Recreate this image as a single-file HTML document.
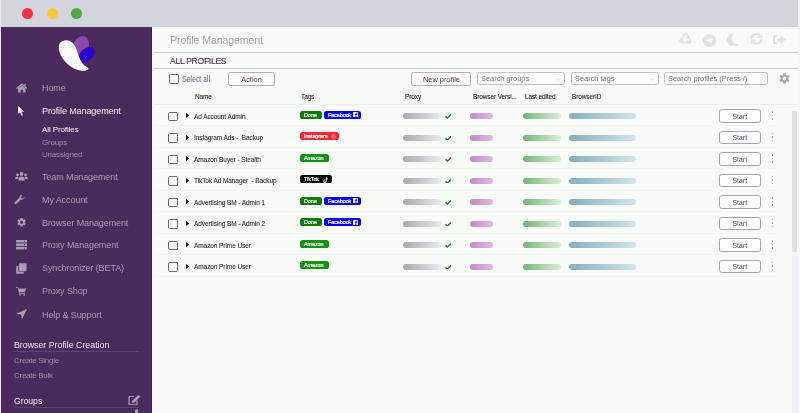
<!DOCTYPE html><html><head><meta charset="utf-8"><style>
html,body{margin:0;padding:0;width:800px;height:413px;overflow:hidden;background:#fafbfa}
body{position:relative;font-family:"Liberation Sans",sans-serif}
.a{position:absolute}
.t{position:absolute;white-space:nowrap;line-height:1;will-change:transform}
.btn{border:1px solid #a7a4ad;border-radius:2.5px;box-sizing:border-box;text-align:center;background:#fdfdfd;white-space:nowrap}
.sel{will-change:transform;border:1px solid #c2c2c6;border-radius:2.5px;box-sizing:border-box;font-size:7.3px;color:#7c7c80;padding-left:3.6px;background:#fdfdfd;white-space:nowrap}
.tag{height:7.9px;border-radius:2.6px;box-sizing:border-box;white-space:nowrap}
.tg{will-change:transform;position:absolute;left:3.5px;top:1.85px;font-size:5.5px;line-height:1;color:#fff;letter-spacing:-0.12px;-webkit-text-stroke:0.2px #fff}
</style></head><body>
<div class="a" style="left:0.00px;top:0.00px;width:800.00px;height:27.00px;background:#d2d6dc"></div>
<div class="a" style="left:0.00px;top:0.00px;width:1.00px;height:413.00px;background:#e6e8eb"></div>
<div class="a" style="left:21.80px;top:7.50px;width:11.20px;height:11.20px;background:#ee3344;border-radius:50%"></div>
<div class="a" style="left:46.50px;top:7.50px;width:11.20px;height:11.20px;background:#f9c93a;border-radius:50%"></div>
<div class="a" style="left:71.20px;top:7.50px;width:11.20px;height:11.20px;background:#4ca846;border-radius:50%"></div>
<div class="a" style="left:1.00px;top:27.00px;width:151.00px;height:386.00px;background:#4b2b5d"></div>
<div class="a" style="left:151.00px;top:27.00px;width:1.40px;height:386.00px;background:#3d2150"></div>
<div class="a" style="left:152.40px;top:27.00px;width:647.60px;height:386.00px;background:#f9fbf9"></div>
<div class="a" style="left:152.40px;top:27.00px;width:1.60px;height:386.00px;background:#ffffff"></div>
<svg class="a" style="left:50px;top:30px" width="60" height="45" viewBox="0 0 60 45">
<ellipse cx="31" cy="15.8" rx="7.7" ry="10" transform="rotate(22 31 15.8)" fill="#8d48a8"/>
<ellipse cx="36.3" cy="25" rx="9.6" ry="6.2" transform="rotate(-42 36.3 25)" fill="#2a06cf"/>
<path d="M10.5 12.5 C 15 8.5, 22 10, 25 16 C 28 22, 29 29, 33 34 C 35 36.5, 39 37.5, 38.5 39 C 37 41.5, 30 41.5, 24 38.5 C 15 34, 8 24, 8.8 16 C 9 14.5, 9.6 13.3, 10.5 12.5 Z" fill="#fafbfa"/>
</svg>
<div class="t" style="left:42.10px;top:84.28px;font-size:9px;color:#a99bb2;letter-spacing:-0.1px">Home</div>
<div class="t" style="left:42.10px;top:106.78px;font-size:9px;color:#f4f2f5;letter-spacing:-0.1px">Profile Management</div>
<div class="t" style="left:42.10px;top:172.68px;font-size:9px;color:#a99bb2;letter-spacing:-0.1px">Team Management</div>
<div class="t" style="left:42.10px;top:196.08px;font-size:9px;color:#a99bb2;letter-spacing:-0.1px">My Account</div>
<div class="t" style="left:42.10px;top:218.68px;font-size:9px;color:#a99bb2;letter-spacing:-0.1px">Browser Management</div>
<div class="t" style="left:42.10px;top:241.48px;font-size:9px;color:#a99bb2;letter-spacing:-0.1px">Proxy Management</div>
<div class="t" style="left:42.10px;top:264.48px;font-size:9px;color:#a99bb2;letter-spacing:-0.1px">Synchronizer (BETA)</div>
<div class="t" style="left:42.10px;top:287.48px;font-size:9px;color:#a99bb2;letter-spacing:-0.1px">Proxy Shop</div>
<div class="t" style="left:42.10px;top:310.98px;font-size:9px;color:#a99bb2;letter-spacing:-0.1px">Help &amp; Support</div>
<div class="t" style="left:41.80px;top:126.43px;font-size:8px;color:#f4f2f5;letter-spacing:-0.1px">All Profiles</div>
<div class="t" style="left:41.80px;top:138.73px;font-size:8px;color:#9d8ea8;letter-spacing:-0.2px">Groups</div>
<div class="t" style="left:41.80px;top:150.93px;font-size:8px;color:#9d8ea8;letter-spacing:-0.2px">Unassigned</div>
<div class="t" style="left:14.00px;top:341.35px;font-size:8.8px;color:#ece8ee;">Browser Profile Creation</div>
<div class="a" style="left:14.00px;top:350.60px;width:125.00px;height:1.00px;background:#633c7b"></div>
<div class="t" style="left:14.00px;top:356.73px;font-size:8px;color:#9d8ea8;letter-spacing:-0.28px">Create Single</div>
<div class="t" style="left:14.00px;top:371.83px;font-size:8px;color:#9d8ea8;letter-spacing:-0.28px">Create Bulk</div>
<div class="t" style="left:14.00px;top:397.42px;font-size:8.6px;color:#ece8ee;">Groups</div>
<div class="a" style="left:14.00px;top:406.60px;width:125.00px;height:1.00px;background:#633c7b"></div>
<div class="t" style="left:169.70px;top:35.13px;font-size:10.6px;color:#a4a8af;letter-spacing:-0.1px">Profile Management</div>
<div class="a" style="left:154.00px;top:52.00px;width:643.60px;height:1.00px;background:#cdcdd3"></div>
<div class="t" style="left:170.00px;top:57.22px;font-size:8.6px;color:#4f3a62;letter-spacing:-0.3px;-webkit-text-stroke:0.2px #4f3a62">ALL PROFILES</div>
<div class="a" style="left:154.00px;top:68.00px;width:643.60px;height:1.00px;background:#cdcdd3"></div>
<div class="a" style="left:169.30px;top:74.20px;width:9.60px;height:9.60px;border:1.3px solid #6a6a6a;border-radius:1.5px;box-sizing:border-box"></div>
<div class="t" style="left:182.20px;top:75.51px;font-size:8.2px;color:#6c5a84;letter-spacing:-0.1px;transform:scaleX(0.87);transform-origin:0 0">Select all</div>
<div class="a btn" style="left:228.00px;top:72.30px;width:47.00px;height:13.30px;border-color:#b2aeb8"></div>
<div class="t" style="left:228.00px;width:47.00px;text-align:center;top:75.94px;font-size:7.4px;color:#4a3a58;letter-spacing:0px">Action</div>
<div class="a btn" style="left:410.70px;top:72.40px;width:60.80px;height:13.20px;border-color:#b6b2bc"></div>
<div class="t" style="left:410.70px;width:60.80px;text-align:center;top:75.85px;font-size:7.5px;color:#4d3a5e;letter-spacing:-0.05px">New profile</div>
<div class="a sel" style="left:477.20px;top:72.4px;width:87.60px;height:12.8px;"></div>
<div class="t" style="left:480.90px;top:75.39px;font-size:7.45px;color:#737377;letter-spacing:-0.02px">Search groups</div>
<svg class="a" style="left:555.60px;top:77.8px" width="4.4" height="2.8" viewBox="0 0 5 3"><path d="M0.3 0.3 L2.5 2.5 L4.7 0.3" fill="none" stroke="#b4b4b8" stroke-width="0.6"/></svg>
<div class="a sel" style="left:570.90px;top:72.4px;width:88.10px;height:12.8px;"></div>
<div class="t" style="left:574.60px;top:75.39px;font-size:7.45px;color:#737377;letter-spacing:-0.02px">Search tags</div>
<svg class="a" style="left:649.80px;top:77.8px" width="4.4" height="2.8" viewBox="0 0 5 3"><path d="M0.3 0.3 L2.5 2.5 L4.7 0.3" fill="none" stroke="#b4b4b8" stroke-width="0.6"/></svg>
<div class="a sel" style="left:664.30px;top:72.4px;width:104.00px;height:12.8px;"></div>
<div class="t" style="left:668.00px;top:75.39px;font-size:7.45px;color:#737377;letter-spacing:-0.02px">Search profiles (Press /)</div>
<svg class="a" style="left:777.9px;top:72.2px" width="13" height="13" viewBox="0 0 24 24"><path fill="#a8a8ac" d="M19.14 12.94c.04-.3.06-.61.06-.94 0-.32-.02-.64-.07-.94l2.03-1.58a.49.49 0 0 0 .12-.61l-1.92-3.32a.488.488 0 0 0-.59-.22l-2.39.96c-.5-.38-1.03-.7-1.62-.94l-.36-2.54a.484.484 0 0 0-.48-.41h-3.84c-.24 0-.43.17-.47.41l-.36 2.54c-.59.24-1.13.57-1.62.94l-2.39-.96c-.22-.08-.47 0-.59.22L2.74 8.87c-.12.21-.08.47.12.61l2.03 1.58c-.05.3-.09.63-.09.94s.02.64.07.94l-2.03 1.58a.49.49 0 0 0-.12.61l1.92 3.32c.12.22.37.29.59.22l2.39-.96c.5.38 1.03.7 1.62.94l.36 2.54c.05.24.24.41.48.41h3.84c.24 0 .44-.17.47-.41l.36-2.54c.59-.24 1.13-.56 1.62-.94l2.39.96c.22.08.47 0 .59-.22l1.92-3.32c.12-.22.07-.47-.12-.61l-2.01-1.58zM12 15.6c-1.98 0-3.6-1.62-3.6-3.6s1.62-3.6 3.6-3.6 3.6 1.62 3.6 3.6-1.62 3.6-3.6 3.6z"/></svg>
<div class="t" style="left:194.80px;top:94.10px;font-size:6.5px;color:#262626;letter-spacing:-0.12px;-webkit-text-stroke:0.1px #262626">Name</div>
<div class="t" style="left:301.00px;top:94.10px;font-size:6.5px;color:#262626;letter-spacing:-0.12px;-webkit-text-stroke:0.1px #262626">Tags</div>
<div class="t" style="left:405.00px;top:94.10px;font-size:6.5px;color:#262626;letter-spacing:-0.12px;-webkit-text-stroke:0.1px #262626">Proxy</div>
<div class="t" style="left:473.00px;top:94.10px;font-size:6.5px;color:#262626;letter-spacing:-0.12px;-webkit-text-stroke:0.1px #262626">Browser Versi...</div>
<div class="t" style="left:525.00px;top:94.10px;font-size:6.5px;color:#262626;letter-spacing:-0.12px;-webkit-text-stroke:0.1px #262626">Last edited</div>
<div class="t" style="left:571.50px;top:94.10px;font-size:6.5px;color:#262626;letter-spacing:-0.12px;-webkit-text-stroke:0.1px #262626">BrowserID</div>
<div class="a" style="left:154.00px;top:103.70px;width:643.00px;height:1.00px;background:#ececef"></div>
<div class="a" style="left:168.10px;top:111.90px;width:9.70px;height:9.50px;border:1.3px solid #6a6a6a;border-radius:1.5px;box-sizing:border-box"></div>
<svg class="a" style="left:186.2px;top:113.10px" width="3.2" height="5" viewBox="0 0 3.2 5"><path d="M0 0 L3.2 2.5 L0 5Z" fill="#111"/></svg>
<div class="t" style="left:194.10px;top:113.80px;font-size:6.5px;color:#2c2c2c;letter-spacing:-0.08px;-webkit-text-stroke:0.08px #2c2c2c">Ad Account Admin</div>
<div class="a tag" style="left:300.40px;top:110.90px;width:21.3px;background:#0b7a0b"><span class="tg">Done</span></div>
<div class="a tag" style="left:324.10px;top:110.90px;width:37.2px;background:#0000ee"><span class="tg">Facebook</span><svg class="a" style="left:29px;top:1.5px" width="5" height="5" viewBox="0 0 10 10"><rect x="0" y="0" width="10" height="10" rx="1.5" fill="#fff"/><path d="M6.8 10 V6 H8.2 L8.4 4.5 H6.8 V3.6 C6.8 3.1 7 2.8 7.6 2.8 H8.5 V1.4 C8.2 1.35 7.7 1.3 7.2 1.3 C5.9 1.3 5.1 2.1 5.1 3.4 V4.5 H3.8 V6 H5.1 V10Z" fill="#0000ee"/></svg></div>
<div class="a" style="left:402.50px;top:113.00px;width:38.50px;height:6.30px;border-radius:4px;background:linear-gradient(90deg,#a9a9b1,#e9e9ed)"></div>
<svg class="a" style="left:444.8px;top:114.00px" width="6.5" height="4.8" viewBox="0 0 6.5 4.8"><path d="M0.5 2.4 L2.4 4.1 L6 0.6" fill="none" stroke="#139413" stroke-width="1.45"/></svg>
<div class="a" style="left:469.70px;top:113.00px;width:23.70px;height:6.30px;border-radius:4px;background:linear-gradient(90deg,#c388ca,#e0bce0)"></div>
<div class="a" style="left:523.10px;top:113.00px;width:37.90px;height:6.30px;border-radius:4px;background:linear-gradient(90deg,#74b574,#dbeeda)"></div>
<div class="a" style="left:568.60px;top:113.00px;width:67.40px;height:6.30px;border-radius:4px;background:linear-gradient(90deg,#85aebe,#d3e5ea)"></div>
<div class="a btn" style="left:719.20px;top:109.30px;width:41.60px;height:13.30px;border-color:#a7a4ad"></div>
<div class="t" style="left:719.20px;width:41.60px;text-align:center;top:113.96px;font-size:6.9px;color:#58486a;letter-spacing:0px">Start</div>
<div class="a" style="left:771.90px;top:111.40px;width:1.20px;height:1.20px;background:#a8a8ac;border-radius:50%"></div>
<div class="a" style="left:771.90px;top:114.90px;width:1.20px;height:1.20px;background:#a8a8ac;border-radius:50%"></div>
<div class="a" style="left:771.90px;top:118.40px;width:1.20px;height:1.20px;background:#a8a8ac;border-radius:50%"></div>
<div class="a" style="left:154.00px;top:125.30px;width:625.00px;height:0.70px;background:#f4f5f4"></div>
<div class="a" style="left:168.10px;top:133.40px;width:9.70px;height:9.50px;border:1.3px solid #6a6a6a;border-radius:1.5px;box-sizing:border-box"></div>
<svg class="a" style="left:186.2px;top:134.60px" width="3.2" height="5" viewBox="0 0 3.2 5"><path d="M0 0 L3.2 2.5 L0 5Z" fill="#111"/></svg>
<div class="t" style="left:194.10px;top:135.30px;font-size:6.5px;color:#2c2c2c;letter-spacing:-0.08px;-webkit-text-stroke:0.08px #2c2c2c">Instagram Ads -&nbsp; Backup</div>
<div class="a tag" style="left:300.40px;top:132.40px;width:38.5px;background:#ee2a38"><span class="tg">Instagram</span><svg class="a" style="left:30.5px;top:1.6px" width="5" height="5" viewBox="0 0 10 10"><rect x="0.8" y="0.8" width="8.4" height="8.4" rx="2.5" fill="none" stroke="#ffb9a8" stroke-width="1.2" stroke-dasharray="1.5 1"/><circle cx="5" cy="5" r="1.8" fill="none" stroke="#ffc6c6" stroke-width="1"/></svg></div>
<div class="a" style="left:402.50px;top:134.50px;width:38.50px;height:6.30px;border-radius:4px;background:linear-gradient(90deg,#a9a9b1,#e9e9ed)"></div>
<svg class="a" style="left:444.8px;top:135.50px" width="6.5" height="4.8" viewBox="0 0 6.5 4.8"><path d="M0.5 2.4 L2.4 4.1 L6 0.6" fill="none" stroke="#139413" stroke-width="1.45"/></svg>
<div class="a" style="left:469.70px;top:134.50px;width:23.70px;height:6.30px;border-radius:4px;background:linear-gradient(90deg,#c388ca,#e0bce0)"></div>
<div class="a" style="left:523.10px;top:134.50px;width:37.90px;height:6.30px;border-radius:4px;background:linear-gradient(90deg,#74b574,#dbeeda)"></div>
<div class="a" style="left:568.60px;top:134.50px;width:67.40px;height:6.30px;border-radius:4px;background:linear-gradient(90deg,#85aebe,#d3e5ea)"></div>
<div class="a btn" style="left:719.20px;top:130.80px;width:41.60px;height:13.30px;border-color:#a7a4ad"></div>
<div class="t" style="left:719.20px;width:41.60px;text-align:center;top:135.46px;font-size:6.9px;color:#58486a;letter-spacing:0px">Start</div>
<div class="a" style="left:771.90px;top:132.90px;width:1.20px;height:1.20px;background:#a8a8ac;border-radius:50%"></div>
<div class="a" style="left:771.90px;top:136.40px;width:1.20px;height:1.20px;background:#a8a8ac;border-radius:50%"></div>
<div class="a" style="left:771.90px;top:139.90px;width:1.20px;height:1.20px;background:#a8a8ac;border-radius:50%"></div>
<div class="a" style="left:154.00px;top:146.80px;width:625.00px;height:0.70px;background:#f4f5f4"></div>
<div class="a" style="left:168.10px;top:154.90px;width:9.70px;height:9.50px;border:1.3px solid #6a6a6a;border-radius:1.5px;box-sizing:border-box"></div>
<svg class="a" style="left:186.2px;top:156.10px" width="3.2" height="5" viewBox="0 0 3.2 5"><path d="M0 0 L3.2 2.5 L0 5Z" fill="#111"/></svg>
<div class="t" style="left:194.10px;top:156.80px;font-size:6.5px;color:#2c2c2c;letter-spacing:-0.08px;-webkit-text-stroke:0.08px #2c2c2c">Amazon Buyer - Stealth</div>
<div class="a tag" style="left:300.40px;top:153.90px;width:28.7px;background:#129312"><span class="tg">Amazon</span></div>
<div class="a" style="left:402.50px;top:156.00px;width:38.50px;height:6.30px;border-radius:4px;background:linear-gradient(90deg,#a9a9b1,#e9e9ed)"></div>
<svg class="a" style="left:444.8px;top:157.00px" width="6.5" height="4.8" viewBox="0 0 6.5 4.8"><path d="M0.5 2.4 L2.4 4.1 L6 0.6" fill="none" stroke="#139413" stroke-width="1.45"/></svg>
<div class="a" style="left:469.70px;top:156.00px;width:23.70px;height:6.30px;border-radius:4px;background:linear-gradient(90deg,#c388ca,#e0bce0)"></div>
<div class="a" style="left:523.10px;top:156.00px;width:37.90px;height:6.30px;border-radius:4px;background:linear-gradient(90deg,#74b574,#dbeeda)"></div>
<div class="a" style="left:568.60px;top:156.00px;width:67.40px;height:6.30px;border-radius:4px;background:linear-gradient(90deg,#85aebe,#d3e5ea)"></div>
<div class="a btn" style="left:719.20px;top:152.30px;width:41.60px;height:13.30px;border-color:#a7a4ad"></div>
<div class="t" style="left:719.20px;width:41.60px;text-align:center;top:156.96px;font-size:6.9px;color:#58486a;letter-spacing:0px">Start</div>
<div class="a" style="left:771.90px;top:154.40px;width:1.20px;height:1.20px;background:#a8a8ac;border-radius:50%"></div>
<div class="a" style="left:771.90px;top:157.90px;width:1.20px;height:1.20px;background:#a8a8ac;border-radius:50%"></div>
<div class="a" style="left:771.90px;top:161.40px;width:1.20px;height:1.20px;background:#a8a8ac;border-radius:50%"></div>
<div class="a" style="left:154.00px;top:168.30px;width:625.00px;height:0.70px;background:#f4f5f4"></div>
<div class="a" style="left:168.10px;top:176.40px;width:9.70px;height:9.50px;border:1.3px solid #6a6a6a;border-radius:1.5px;box-sizing:border-box"></div>
<svg class="a" style="left:186.2px;top:177.60px" width="3.2" height="5" viewBox="0 0 3.2 5"><path d="M0 0 L3.2 2.5 L0 5Z" fill="#111"/></svg>
<div class="t" style="left:194.10px;top:178.30px;font-size:6.5px;color:#2c2c2c;letter-spacing:-0.08px;-webkit-text-stroke:0.08px #2c2c2c">TikTok Ad Manager&nbsp; - Backup</div>
<div class="a tag" style="left:300.40px;top:175.40px;width:31.8px;background:#000000"><span class="tg">TikTok</span><svg class="a" style="left:22.6px;top:1.2px" width="5.4" height="6" viewBox="0 0 9 10"><path d="M4.6 0.3 H6.3 C6.4 1.6 7.3 2.6 8.7 2.7 V4.3 C7.7 4.3 6.9 4 6.3 3.5 V6.7 C6.3 8.5 4.9 9.8 3.2 9.8 C1.5 9.8 0.3 8.5 0.3 6.9 C0.3 5.2 1.7 3.9 3.5 4 V5.6 C2.6 5.5 1.9 6.1 1.9 6.9 C1.9 7.6 2.5 8.2 3.2 8.2 C4 8.2 4.6 7.6 4.6 6.8Z" fill="#f4f4f4"/></svg></div>
<div class="a" style="left:402.50px;top:177.50px;width:38.50px;height:6.30px;border-radius:4px;background:linear-gradient(90deg,#a9a9b1,#e9e9ed)"></div>
<svg class="a" style="left:444.8px;top:178.50px" width="6.5" height="4.8" viewBox="0 0 6.5 4.8"><path d="M0.5 2.4 L2.4 4.1 L6 0.6" fill="none" stroke="#139413" stroke-width="1.45"/></svg>
<div class="a" style="left:469.70px;top:177.50px;width:23.70px;height:6.30px;border-radius:4px;background:linear-gradient(90deg,#c388ca,#e0bce0)"></div>
<div class="a" style="left:523.10px;top:177.50px;width:37.90px;height:6.30px;border-radius:4px;background:linear-gradient(90deg,#74b574,#dbeeda)"></div>
<div class="a" style="left:568.60px;top:177.50px;width:67.40px;height:6.30px;border-radius:4px;background:linear-gradient(90deg,#85aebe,#d3e5ea)"></div>
<div class="a btn" style="left:719.20px;top:173.80px;width:41.60px;height:13.30px;border-color:#a7a4ad"></div>
<div class="t" style="left:719.20px;width:41.60px;text-align:center;top:178.46px;font-size:6.9px;color:#58486a;letter-spacing:0px">Start</div>
<div class="a" style="left:771.90px;top:175.90px;width:1.20px;height:1.20px;background:#a8a8ac;border-radius:50%"></div>
<div class="a" style="left:771.90px;top:179.40px;width:1.20px;height:1.20px;background:#a8a8ac;border-radius:50%"></div>
<div class="a" style="left:771.90px;top:182.90px;width:1.20px;height:1.20px;background:#a8a8ac;border-radius:50%"></div>
<div class="a" style="left:154.00px;top:189.80px;width:625.00px;height:0.70px;background:#f4f5f4"></div>
<div class="a" style="left:168.10px;top:197.90px;width:9.70px;height:9.50px;border:1.3px solid #6a6a6a;border-radius:1.5px;box-sizing:border-box"></div>
<svg class="a" style="left:186.2px;top:199.10px" width="3.2" height="5" viewBox="0 0 3.2 5"><path d="M0 0 L3.2 2.5 L0 5Z" fill="#111"/></svg>
<div class="t" style="left:194.10px;top:199.80px;font-size:6.5px;color:#2c2c2c;letter-spacing:-0.08px;-webkit-text-stroke:0.08px #2c2c2c">Advertising BM - Admin 1</div>
<div class="a tag" style="left:300.40px;top:196.90px;width:21.3px;background:#0b7a0b"><span class="tg">Done</span></div>
<div class="a tag" style="left:324.10px;top:196.90px;width:37.2px;background:#0000ee"><span class="tg">Facebook</span><svg class="a" style="left:29px;top:1.5px" width="5" height="5" viewBox="0 0 10 10"><rect x="0" y="0" width="10" height="10" rx="1.5" fill="#fff"/><path d="M6.8 10 V6 H8.2 L8.4 4.5 H6.8 V3.6 C6.8 3.1 7 2.8 7.6 2.8 H8.5 V1.4 C8.2 1.35 7.7 1.3 7.2 1.3 C5.9 1.3 5.1 2.1 5.1 3.4 V4.5 H3.8 V6 H5.1 V10Z" fill="#0000ee"/></svg></div>
<div class="a" style="left:402.50px;top:199.00px;width:38.50px;height:6.30px;border-radius:4px;background:linear-gradient(90deg,#a9a9b1,#e9e9ed)"></div>
<svg class="a" style="left:444.8px;top:200.00px" width="6.5" height="4.8" viewBox="0 0 6.5 4.8"><path d="M0.5 2.4 L2.4 4.1 L6 0.6" fill="none" stroke="#139413" stroke-width="1.45"/></svg>
<div class="a" style="left:469.70px;top:199.00px;width:23.70px;height:6.30px;border-radius:4px;background:linear-gradient(90deg,#c388ca,#e0bce0)"></div>
<div class="a" style="left:523.10px;top:199.00px;width:37.90px;height:6.30px;border-radius:4px;background:linear-gradient(90deg,#74b574,#dbeeda)"></div>
<div class="a" style="left:568.60px;top:199.00px;width:67.40px;height:6.30px;border-radius:4px;background:linear-gradient(90deg,#85aebe,#d3e5ea)"></div>
<div class="a btn" style="left:719.20px;top:195.30px;width:41.60px;height:13.30px;border-color:#a7a4ad"></div>
<div class="t" style="left:719.20px;width:41.60px;text-align:center;top:199.96px;font-size:6.9px;color:#58486a;letter-spacing:0px">Start</div>
<div class="a" style="left:771.90px;top:197.40px;width:1.20px;height:1.20px;background:#a8a8ac;border-radius:50%"></div>
<div class="a" style="left:771.90px;top:200.90px;width:1.20px;height:1.20px;background:#a8a8ac;border-radius:50%"></div>
<div class="a" style="left:771.90px;top:204.40px;width:1.20px;height:1.20px;background:#a8a8ac;border-radius:50%"></div>
<div class="a" style="left:154.00px;top:211.30px;width:625.00px;height:0.70px;background:#f4f5f4"></div>
<div class="a" style="left:168.10px;top:219.40px;width:9.70px;height:9.50px;border:1.3px solid #6a6a6a;border-radius:1.5px;box-sizing:border-box"></div>
<svg class="a" style="left:186.2px;top:220.60px" width="3.2" height="5" viewBox="0 0 3.2 5"><path d="M0 0 L3.2 2.5 L0 5Z" fill="#111"/></svg>
<div class="t" style="left:194.10px;top:221.30px;font-size:6.5px;color:#2c2c2c;letter-spacing:-0.08px;-webkit-text-stroke:0.08px #2c2c2c">Advertising BM - Admin 2</div>
<div class="a tag" style="left:300.40px;top:218.40px;width:21.3px;background:#0b7a0b"><span class="tg">Done</span></div>
<div class="a tag" style="left:324.10px;top:218.40px;width:37.2px;background:#0000ee"><span class="tg">Facebook</span><svg class="a" style="left:29px;top:1.5px" width="5" height="5" viewBox="0 0 10 10"><rect x="0" y="0" width="10" height="10" rx="1.5" fill="#fff"/><path d="M6.8 10 V6 H8.2 L8.4 4.5 H6.8 V3.6 C6.8 3.1 7 2.8 7.6 2.8 H8.5 V1.4 C8.2 1.35 7.7 1.3 7.2 1.3 C5.9 1.3 5.1 2.1 5.1 3.4 V4.5 H3.8 V6 H5.1 V10Z" fill="#0000ee"/></svg></div>
<div class="a" style="left:402.50px;top:220.50px;width:38.50px;height:6.30px;border-radius:4px;background:linear-gradient(90deg,#a9a9b1,#e9e9ed)"></div>
<svg class="a" style="left:444.8px;top:221.50px" width="6.5" height="4.8" viewBox="0 0 6.5 4.8"><path d="M0.5 2.4 L2.4 4.1 L6 0.6" fill="none" stroke="#139413" stroke-width="1.45"/></svg>
<div class="a" style="left:469.70px;top:220.50px;width:23.70px;height:6.30px;border-radius:4px;background:linear-gradient(90deg,#c388ca,#e0bce0)"></div>
<div class="a" style="left:523.10px;top:220.50px;width:37.90px;height:6.30px;border-radius:4px;background:linear-gradient(90deg,#74b574,#dbeeda)"></div>
<div class="a" style="left:568.60px;top:220.50px;width:67.40px;height:6.30px;border-radius:4px;background:linear-gradient(90deg,#85aebe,#d3e5ea)"></div>
<div class="a btn" style="left:719.20px;top:216.80px;width:41.60px;height:13.30px;border-color:#a7a4ad"></div>
<div class="t" style="left:719.20px;width:41.60px;text-align:center;top:221.46px;font-size:6.9px;color:#58486a;letter-spacing:0px">Start</div>
<div class="a" style="left:771.90px;top:218.90px;width:1.20px;height:1.20px;background:#a8a8ac;border-radius:50%"></div>
<div class="a" style="left:771.90px;top:222.40px;width:1.20px;height:1.20px;background:#a8a8ac;border-radius:50%"></div>
<div class="a" style="left:771.90px;top:225.90px;width:1.20px;height:1.20px;background:#a8a8ac;border-radius:50%"></div>
<div class="a" style="left:154.00px;top:232.80px;width:625.00px;height:0.70px;background:#f4f5f4"></div>
<div class="a" style="left:168.10px;top:240.90px;width:9.70px;height:9.50px;border:1.3px solid #6a6a6a;border-radius:1.5px;box-sizing:border-box"></div>
<svg class="a" style="left:186.2px;top:242.10px" width="3.2" height="5" viewBox="0 0 3.2 5"><path d="M0 0 L3.2 2.5 L0 5Z" fill="#111"/></svg>
<div class="t" style="left:194.10px;top:242.80px;font-size:6.5px;color:#2c2c2c;letter-spacing:-0.08px;-webkit-text-stroke:0.08px #2c2c2c">Amazon Prime User</div>
<div class="a tag" style="left:300.40px;top:239.90px;width:28.7px;background:#129312"><span class="tg">Amazon</span></div>
<div class="a" style="left:402.50px;top:242.00px;width:38.50px;height:6.30px;border-radius:4px;background:linear-gradient(90deg,#a9a9b1,#e9e9ed)"></div>
<svg class="a" style="left:444.8px;top:243.00px" width="6.5" height="4.8" viewBox="0 0 6.5 4.8"><path d="M0.5 2.4 L2.4 4.1 L6 0.6" fill="none" stroke="#139413" stroke-width="1.45"/></svg>
<div class="a" style="left:469.70px;top:242.00px;width:23.70px;height:6.30px;border-radius:4px;background:linear-gradient(90deg,#c388ca,#e0bce0)"></div>
<div class="a" style="left:523.10px;top:242.00px;width:37.90px;height:6.30px;border-radius:4px;background:linear-gradient(90deg,#74b574,#dbeeda)"></div>
<div class="a" style="left:568.60px;top:242.00px;width:67.40px;height:6.30px;border-radius:4px;background:linear-gradient(90deg,#85aebe,#d3e5ea)"></div>
<div class="a btn" style="left:719.20px;top:238.30px;width:41.60px;height:13.30px;border-color:#a7a4ad"></div>
<div class="t" style="left:719.20px;width:41.60px;text-align:center;top:242.96px;font-size:6.9px;color:#58486a;letter-spacing:0px">Start</div>
<div class="a" style="left:771.90px;top:240.40px;width:1.20px;height:1.20px;background:#a8a8ac;border-radius:50%"></div>
<div class="a" style="left:771.90px;top:243.90px;width:1.20px;height:1.20px;background:#a8a8ac;border-radius:50%"></div>
<div class="a" style="left:771.90px;top:247.40px;width:1.20px;height:1.20px;background:#a8a8ac;border-radius:50%"></div>
<div class="a" style="left:154.00px;top:254.30px;width:625.00px;height:0.70px;background:#f4f5f4"></div>
<div class="a" style="left:168.10px;top:262.40px;width:9.70px;height:9.50px;border:1.3px solid #6a6a6a;border-radius:1.5px;box-sizing:border-box"></div>
<svg class="a" style="left:186.2px;top:263.60px" width="3.2" height="5" viewBox="0 0 3.2 5"><path d="M0 0 L3.2 2.5 L0 5Z" fill="#111"/></svg>
<div class="t" style="left:194.10px;top:264.30px;font-size:6.5px;color:#2c2c2c;letter-spacing:-0.08px;-webkit-text-stroke:0.08px #2c2c2c">Amazon Prime User</div>
<div class="a tag" style="left:300.40px;top:261.40px;width:28.7px;background:#129312"><span class="tg">Amazon</span></div>
<div class="a" style="left:402.50px;top:263.50px;width:38.50px;height:6.30px;border-radius:4px;background:linear-gradient(90deg,#a9a9b1,#e9e9ed)"></div>
<svg class="a" style="left:444.8px;top:264.50px" width="6.5" height="4.8" viewBox="0 0 6.5 4.8"><path d="M0.5 2.4 L2.4 4.1 L6 0.6" fill="none" stroke="#139413" stroke-width="1.45"/></svg>
<div class="a" style="left:469.70px;top:263.50px;width:23.70px;height:6.30px;border-radius:4px;background:linear-gradient(90deg,#c388ca,#e0bce0)"></div>
<div class="a" style="left:523.10px;top:263.50px;width:37.90px;height:6.30px;border-radius:4px;background:linear-gradient(90deg,#74b574,#dbeeda)"></div>
<div class="a" style="left:568.60px;top:263.50px;width:67.40px;height:6.30px;border-radius:4px;background:linear-gradient(90deg,#85aebe,#d3e5ea)"></div>
<div class="a btn" style="left:719.20px;top:259.80px;width:41.60px;height:13.30px;border-color:#a7a4ad"></div>
<div class="t" style="left:719.20px;width:41.60px;text-align:center;top:264.46px;font-size:6.9px;color:#58486a;letter-spacing:0px">Start</div>
<div class="a" style="left:771.90px;top:261.90px;width:1.20px;height:1.20px;background:#a8a8ac;border-radius:50%"></div>
<div class="a" style="left:771.90px;top:265.40px;width:1.20px;height:1.20px;background:#a8a8ac;border-radius:50%"></div>
<div class="a" style="left:771.90px;top:268.90px;width:1.20px;height:1.20px;background:#a8a8ac;border-radius:50%"></div>
<div class="a" style="left:154.00px;top:275.80px;width:625.00px;height:0.70px;background:#f4f5f4"></div>
<div class="a" style="left:792.20px;top:110.50px;width:4.60px;height:141.50px;background:#dedede;border-radius:1px"></div>
<svg class="a" style="left:702.6px;top:33.5px" width="13" height="13" viewBox="0 0 24 24"><circle cx="12" cy="12" r="12" fill="#e1e2e5"/><path d="M5.5 11.8 L17.5 6.8 L15.8 17.5 L11.8 14.5 L10.2 17 L9.8 13.2 L15 8.8 L8.8 12.8 Z" fill="#fafbfa"/></svg>
<svg class="a" style="left:726.8px;top:32.8px" width="11.8" height="13.6" viewBox="0 0 20 23"><path d="M11.5 0.3 C5 0.6 0.2 5.5 0.2 11.5 C0.2 17.7 5.2 22.7 11.4 22.7 C14.7 22.7 17.6 21.3 19.7 19 C13.5 19.5 8.3 15 8.3 9 C8.3 5.4 9.6 2.3 11.5 0.3Z" fill="#e1e2e5"/></svg>
<svg class="a" style="left:749.8px;top:33.4px" width="13.2" height="11.6" viewBox="0 0 24 21"><path d="M3.2 9.5 A8.8 8.8 0 0 1 18.5 4.8" fill="none" stroke="#e1e2e5" stroke-width="4"/><path d="M22.5 0 V9 H13.5Z" fill="#e1e2e5"/><path d="M20.8 11.5 A8.8 8.8 0 0 1 5.5 16.2" fill="none" stroke="#e1e2e5" stroke-width="4"/><path d="M1.5 21 V12 H10.5Z" fill="#e1e2e5"/></svg>
<svg class="a" style="left:773.3px;top:34.6px" width="12.8" height="9.6" viewBox="0 0 24 18"><path d="M8 2 H4.5 C3 2 2 3 2 4.5 V13.5 C2 15 3 16 4.5 16 H8" fill="none" stroke="#e1e2e5" stroke-width="3.6"/><path d="M8 5.5 H14 V0.5 L23.5 9 L14 17.5 V12.5 H8Z" fill="#e1e2e5"/></svg>
<svg class="a" style="left:679px;top:33.2px" width="13" height="12.2" viewBox="0 0 24 22"><path d="M8 1.5 C9 0 10.5 0 12 0 C13.5 0 14.8 0.5 15.6 1.8 L17.5 5 L19.5 3.8 L18.3 9.8 L12.5 8.3 L14.5 7.2 L12.5 3.8 C12.2 3.3 11.7 3.3 11.5 3.8 L9.3 7.5 L5.5 5.2Z M20 9.5 L22.8 14 C23.6 15.3 23.6 16.8 22.8 18.2 C22 19.5 20.7 20.2 19.2 20.2 H15 V22 L11.8 17 L15 12 V13.6 H19 C19.5 13.6 19.8 13.2 19.5 12.8 L16.5 8.2Z M4.5 8 L8.3 10.3 L6.5 13.3 C6.2 13.8 6.5 14.3 7 14.3 H10.5 V18.8 H4.5 C3 18.8 1.8 18 1 16.8 C0.2 15.5 0.3 14 1 12.8 L2.8 9.5 L0.8 8.5 L6.8 7.5Z" fill="#e1e2e5"/></svg>
<svg class="a" style="left:15.8px;top:83.3px" width="11.6" height="9.8" viewBox="0 0 25 20"><path d="M12.5 0 L25 10.5 L23 12.5 L12.5 3.8 L2 12.5 L0 10.5Z" fill="#a79fb0"/><path d="M4.5 11 L12.5 4.8 L20.5 11 V20 H15 V14 H10 V20 H4.5Z" fill="#a79fb0"/><rect x="18" y="1" width="3" height="5" fill="#a79fb0"/></svg>
<svg class="a" style="left:17.5px;top:105.6px" width="7.2" height="10" viewBox="0 0 14 20"><path d="M0 0 L0 16 L4 12.5 L7 19.5 L9.5 18.5 L6.6 11.6 L12.5 11.6Z" fill="#f4f2f5"/></svg>
<svg class="a" style="left:14.8px;top:172.2px" width="13" height="8.4" viewBox="0 0 26 17"><circle cx="13" cy="4" r="3.8" fill="#a79fb0"/><circle cx="5" cy="6" r="2.8" fill="#a79fb0"/><circle cx="21" cy="6" r="2.8" fill="#a79fb0"/><path d="M6.5 17 C6.5 11, 9 9, 13 9 C17 9, 19.5 11, 19.5 17Z" fill="#a79fb0"/><path d="M0 14 C0 10.5, 1.5 9.5, 5 9.5 C6.5 9.5 7 10 7.5 10.3 C6 12 5.5 13 5.5 14Z" fill="#a79fb0"/><path d="M26 14 C26 10.5, 24.5 9.5, 21 9.5 C19.5 9.5 19 10 18.5 10.3 C20 12 20.5 13 20.5 14Z" fill="#a79fb0"/></svg>
<svg class="a" style="left:14.4px;top:195px" width="11" height="10" viewBox="0 0 22 20"><path d="M21 3.5 L17.5 7 L14.5 6.5 L14 3.5 L17.5 0 C14 -0.8 10.5 1.5 11 5.5 L1.5 14.5 C0 16 1.5 19.5 4 18.5 L13.5 9.3 C17.5 10 21.5 7 21 3.5Z" fill="#a79fb0"/></svg>
<svg class="a" style="left:15.6px;top:216.6px" width="11.2" height="10.6" viewBox="0 0 24 24"><path fill="#a79fb0" d="M19.14 12.94c.04-.3.06-.61.06-.94 0-.32-.02-.64-.07-.94l2.03-1.58a.49.49 0 0 0 .12-.61l-1.92-3.32a.488.488 0 0 0-.59-.22l-2.39.96c-.5-.38-1.03-.7-1.620-.94l-.36-2.54a.484.484 0 0 0-.48-.41h-3.84c-.24 0-.43.17-.47.41l-.36 2.54c-.59.24-1.13.57-1.62.94l-2.39-.96c-.22-.08-.47 0-.59.22L2.74 8.87c-.12.21-.08.47.12.61l2.03 1.58c-.05.3-.09.63-.09.94s.02.64.07.94l-2.03 1.58a.49.49 0 0 0-.12.61l1.920 3.32c.12.22.37.29.59.22l2.39-.96c.5.38 1.03.7 1.62.94l.36 2.54c.05.24.24.41.48.41h3.84c.24 0 .44-.17.47-.41l.36-2.54c.59-.24 1.13-.56 1.62-.94l2.39.96c.22.08.47 0 .59-.22l1.92-3.32c.12-.22.07-.47-.12-.61l-2.01-1.58zM12 15.6c-1.98 0-3.6-1.62-3.6-3.6s1.62-3.6 3.6-3.6 3.6 1.62 3.6 3.6-1.62 3.6-3.6 3.6z"/></svg>
<svg class="a" style="left:16px;top:240.4px" width="11" height="9.4" viewBox="0 0 22 19"><rect x="0" y="0" width="22" height="5" fill="#a79fb0"/><rect x="0" y="7" width="22" height="5" fill="#a79fb0"/><rect x="0" y="14" width="22" height="5" fill="#a79fb0"/><rect x="16" y="1.5" width="2" height="2" fill="#4b2b5d"/><rect x="16" y="8.5" width="2" height="2" fill="#4b2b5d"/><rect x="16" y="15.5" width="2" height="2" fill="#4b2b5d"/></svg>
<svg class="a" style="left:16px;top:262.6px" width="11" height="11" viewBox="0 0 22 22"><rect x="0.4" y="6.2" width="15" height="15.4" rx="1.2" fill="#a79fb0"/><rect x="4.4" y="-0.8" width="17.8" height="18.4" rx="2" fill="#4b2b5d"/><rect x="5.8" y="0.5" width="15.2" height="15.8" rx="1.2" fill="#a79fb0"/></svg>
<svg class="a" style="left:16.3px;top:287.3px" width="10.2" height="8.7" viewBox="0 0 20 17"><path d="M0 0 H4 L5 3 H20 L17.5 10 H7 L7.5 11.5 H18 V13 H6.5 L3 1.5 H0Z" fill="#a79fb0"/><circle cx="8" cy="15.3" r="1.7" fill="#a79fb0"/><circle cx="16" cy="15.3" r="1.7" fill="#a79fb0"/></svg>
<svg class="a" style="left:16px;top:309.4px" width="11" height="10.3" viewBox="0 0 22 21"><path d="M22 0 L0 9.5 L10 11 L12 21Z" fill="#a79fb0"/></svg>
<svg class="a" style="left:127.5px;top:394.5px" width="12.5" height="10.5" viewBox="0 0 25 21"><path d="M12 3 H4 C2.9 3 2 3.9 2 5 V17.5 C2 18.6 2.9 19.5 4 19.5 H16 C17.1 19.5 18 18.6 18 17.5 V11" fill="none" stroke="#a79fb0" stroke-width="2.4"/><path d="M7.5 15.5 L8.5 11.5 L19.5 0.8 C20.2 0.1 21.2 0.1 21.9 0.8 L23.4 2.3 C24.1 3 24.1 4 23.4 4.7 L12.5 15.3Z" fill="#a79fb0"/></svg>
<div class="a" style="left:134.60px;top:409.30px;width:3.60px;height:4.70px;background:#a79fb0;border-radius:1.8px 1.8px 0 0"></div>
<div class="a" style="left:798.30px;top:0.00px;width:1.70px;height:413.00px;background:#f6f7f8"></div>
<div class="a" style="left:791.80px;top:252.00px;width:5.80px;height:161.00px;background:#f1f2f1"></div>
</body></html>
